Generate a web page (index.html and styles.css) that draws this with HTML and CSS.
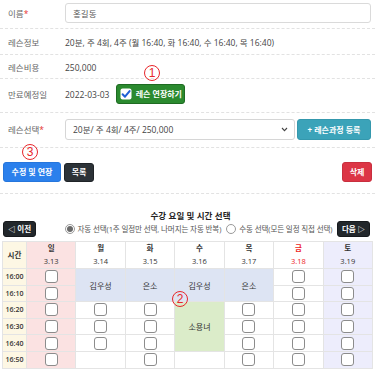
FILE: index.html
```html
<!DOCTYPE html>
<html lang="ko">
<head>
<meta charset="utf-8">
<title>레슨 연장</title>
<link rel="stylesheet" href="styles.css">
</head>
<body>
<div class="page">
  <div class="form-row row-name">
    <div class="label">이름<span class="req">*</span></div>
    <div class="value"><input class="text-input" type="text" value="홍길동"></div>
  </div>
  <div class="form-row row-info">
    <div class="label">레슨정보</div>
    <div class="value">20분, 주 4회, 4주 (월 16:40, 화 16:40, 수 16:40, 목 16:40)</div>
  </div>
  <div class="form-row row-price">
    <div class="label">레슨비용</div>
    <div class="value">250,000</div>
  </div>
  <div class="form-row row-expire">
    <div class="label">만료예정일</div>
    <div class="value">
      <span>2022-03-03</span>
      <button class="btn btn-green" type="button">
        <svg class="check-ico" width="12" height="12" viewBox="0 0 12 12"><rect x="0.5" y="0.5" width="11" height="11" rx="2" fill="#fff"/><path d="M2.6 6.2 L5 8.7 L9.6 3.1" fill="none" stroke="#1f5fd6" stroke-width="2" stroke-linecap="round" stroke-linejoin="round"/></svg>
        레슨 연장하기
      </button>
    </div>
  </div>
  <div class="form-row row-select">
    <div class="label">레슨선택<span class="req">*</span></div>
    <div class="value select-line">
      <div class="select-box">
        <select class="select"><option>20분/ 주 4회/ 4주/ 250,000</option></select>
        <svg class="chev" width="7" height="5" viewBox="0 0 7 5"><path d="M1 1 L3.5 3.6 L6 1" fill="none" stroke="#444" stroke-width="1.1"/></svg>
      </div>
      <button class="btn btn-info" type="button">+ 레슨과정 등록</button>
    </div>
  </div>
  <div class="action-row">
    <button class="btn btn-primary" type="button">수정 및 연장</button>
    <button class="btn btn-dark" type="button">목록</button>
    <button class="btn btn-danger" type="button">삭제</button>
  </div>

  <div class="schedule">
    <div class="sched-title">수강 요일 및 시간 선택</div>
    <div class="nav-row">
      <button class="btn btn-nav" type="button">◁ 이전</button>
      <div class="radios">
        <span class="radio on"></span><span class="radio-label">자동 선택(1주 일정만 선택, 나머지는 자동 반복)</span>
        <span class="radio"></span><span class="radio-label">수동 선택(모든 일정 직접 선택)</span>
      </div>
      <button class="btn btn-nav" type="button">다음 ▷</button>
    </div>

    <div class="grid">
      <div class="cell head time-col">시간</div>
      <div class="cell head sun"><b>일</b><span>3.13</span></div>
      <div class="cell head"><b>월</b><span>3.14</span></div>
      <div class="cell head"><b>화</b><span>3.15</span></div>
      <div class="cell head"><b>수</b><span>3.16</span></div>
      <div class="cell head"><b>목</b><span>3.17</span></div>
      <div class="cell head fri"><b>금</b><span>3.18</span></div>
      <div class="cell head sat"><b>토</b><span>3.19</span></div>

      <div class="cell time-col t">16:00</div>
      <div class="cell sun"><input class="cb" type="checkbox"></div>
      <div class="cell booked blue span2">김우성</div>
      <div class="cell booked blue span2">은소</div>
      <div class="cell booked blue span2">김우성</div>
      <div class="cell booked blue span2">은소</div>
      <div class="cell"><input class="cb" type="checkbox"></div>
      <div class="cell sat"><input class="cb" type="checkbox"></div>

      <div class="cell time-col t">16:10</div>
      <div class="cell sun"><input class="cb" type="checkbox"></div>
      <div class="cell"><input class="cb" type="checkbox"></div>
      <div class="cell sat"><input class="cb" type="checkbox"></div>

      <div class="cell time-col t">16:20</div>
      <div class="cell sun"><input class="cb" type="checkbox"></div>
      <div class="cell"><input class="cb" type="checkbox"></div>
      <div class="cell"><input class="cb" type="checkbox"></div>
      <div class="cell booked green span3">소용녀</div>
      <div class="cell"><input class="cb" type="checkbox"></div>
      <div class="cell"><input class="cb" type="checkbox"></div>
      <div class="cell sat"><input class="cb" type="checkbox"></div>

      <div class="cell time-col t">16:30</div>
      <div class="cell sun"><input class="cb" type="checkbox"></div>
      <div class="cell"><input class="cb" type="checkbox"></div>
      <div class="cell"><input class="cb" type="checkbox"></div>
      <div class="cell"><input class="cb" type="checkbox"></div>
      <div class="cell"><input class="cb" type="checkbox"></div>
      <div class="cell sat"><input class="cb" type="checkbox"></div>

      <div class="cell time-col t">16:40</div>
      <div class="cell sun"><input class="cb" type="checkbox"></div>
      <div class="cell"><input class="cb" type="checkbox"></div>
      <div class="cell"><input class="cb" type="checkbox"></div>
      <div class="cell"><input class="cb" type="checkbox"></div>
      <div class="cell"><input class="cb" type="checkbox"></div>
      <div class="cell sat"><input class="cb" type="checkbox"></div>

      <div class="cell time-col t">16:50</div>
      <div class="cell sun"><input class="cb" type="checkbox"></div>
      <div class="cell"></div>
      <div class="cell"><input class="cb" type="checkbox"></div>
      <div class="cell"></div>
      <div class="cell"><input class="cb" type="checkbox"></div>
      <div class="cell"><input class="cb" type="checkbox"></div>
      <div class="cell sat"><input class="cb" type="checkbox"></div>

      <div class="cell time-col t"></div>
      <div class="cell sun"><input class="cb" type="checkbox"></div>
      <div class="cell booked green"></div>
      <div class="cell"><input class="cb" type="checkbox"></div>
      <div class="cell booked green"></div>
      <div class="cell"><input class="cb" type="checkbox"></div>
      <div class="cell"><input class="cb" type="checkbox"></div>
      <div class="cell sat"><input class="cb" type="checkbox"></div>
    </div>
  </div>

  <span class="marker m1">1</span>
  <span class="marker m2">2</span>
  <span class="marker m3">3</span>
</div>
</body>
</html>
```

FILE: styles.css
```css
* { box-sizing: border-box; }
html, body { margin: 0; padding: 0; overflow: hidden; }
body {
  width: 375px;
  height: 369px;
  background: #fff;
  color: #444;
  font-family: "Open Sans", "Noto Sans CJK KR", sans-serif;
  font-size: 8.5px;
  line-height: 11px;
}
.page { position: relative; }

.form-row {
  display: flex;
  align-items: center;
  border-bottom: 1px dashed #e2e2e2;
}
.label {
  flex: none;
  width: 65px;
  padding-left: 8px;
  color: #666;
}
.req { color: #e5322d; }
.value {
  flex: 1;
  display: flex;
  align-items: center;
  gap: 7px;
  color: #444;
}
.row-name { padding: 3px 4px 5px 0; }
.row-info { padding: 8px 4px 6px 0; }
.row-price { padding: 7px 4px 5px 0; }
.row-expire { padding: 5px 4px 8px 0; }
.row-select { padding: 6px 4px 7px 0; }

.text-input {
  width: 100%;
  height: 20px;
  border: 1px solid #dadada;
  border-radius: 3px;
  padding: 0 7px;
  font: inherit;
  color: #555;
  background: #fff;
}

.btn {
  border: 1px solid transparent;
  border-radius: 3px;
  font-family: "Open Sans", "Noto Sans CJK KR", sans-serif;
  font-size: 8px;
  font-weight: 700;
  line-height: 10px;
  color: #fff;
  padding: 0 6px;
  height: 20px;
  display: inline-flex;
  align-items: center;
  justify-content: center;
  white-space: nowrap;
}
.btn-green {
  background: #2b8a2f;
  border-color: #1e6b22;
  width: 69px;
  gap: 4px;
  padding: 0 4px;
}
.check-ico { flex: none; }

.select-line { gap: 2px; }
.select-box {
  flex: 1;
  height: 21px;
  display: flex;
  align-items: center;
  border: 1px solid #d6d6d6;
  border-radius: 3px;
  padding: 0 6px 0 7px;
  background: #fff;
}
.select {
  flex: 1;
  appearance: none;
  -webkit-appearance: none;
  border: 0;
  padding: 0;
  background: transparent;
  font: inherit;
  color: #444;
  outline: none;
}
.chev { flex: none; }
.btn-info {
  background: #3ba3b9;
  border-color: #3498ad;
  width: 74px;
  height: 21px;
}

.action-row {
  display: flex;
  align-items: center;
  gap: 3px;
  padding: 14px 3px 11px;
  border-bottom: 1px dashed #e2e2e2;
}
.btn-primary { background: #2b80ec; border-color: #2676dc; width: 58px; }
.btn-dark { background: #2c3237; border-color: #1f2327; width: 30px; height: 19px; }
.btn-danger { background: #dc3545; border-color: #c82f3e; width: 30px; margin-left: auto; }

.schedule { padding: 16px 2px 0; }
.sched-title {
  text-align: center;
  font-family: "Noto Sans CJK KR", sans-serif;
  font-weight: 700;
  font-size: 8.5px;
  line-height: 11px;
  color: #222;
  padding-left: 6px;
}
.nav-row {
  display: flex;
  align-items: center;
  justify-content: space-between;
  height: 16px;
  margin: 0 3px 4px 1px;
}
.btn-nav {
  background: #22272b;
  border-color: #16191c;
  height: 16px;
  width: 33px;
  padding: 0 3px;
  font-size: 7.5px;
}
.radios {
  display: flex;
  align-items: center;
  gap: 3px;
  margin-left: 26px;
  font-size: 7.5px;
  letter-spacing: -0.1px;
  color: #555;
}
.radio {
  flex: none;
  width: 10px;
  height: 10px;
  border: 1px solid #9a9a9a;
  border-radius: 50%;
  background: #fff;
  display: inline-flex;
  align-items: center;
  justify-content: center;
}
.radio.on::after {
  content: "";
  width: 6px;
  height: 6px;
  border-radius: 50%;
  background: #6a6a6a;
}
.radio-label { margin-right: 2px; }

.grid {
  display: grid;
  grid-template-columns: 23px repeat(7, 1fr);
  grid-template-rows: 26px;
  grid-auto-rows: 15.6px;
  gap: 1px;
  background: #e4e4e4;
  border: 1px solid #e4e4e4;
}
.cell {
  background: #fff;
  display: flex;
  align-items: center;
  justify-content: center;
  font-size: 8px;
  color: #333;
}
.cell.head {
  flex-direction: column;
  font-size: 7.5px;
  line-height: 13px;
  color: #333;
}
.cell.head b { font-weight: 700; }
.cell.head.time-col { font-weight: 700; }
.cell.head.fri { color: #ee1c25; }
.time-col { background: #fdf7e4; }
.t { font-size: 7px; font-weight: 600; color: #333; }
.sun { background: #fbe2e2; }
.sat { background: #ededfc; }
.booked { font-size: 8px; color: #333; }
.blue { background: #dde4f3; }
.green { background: #dbecc9; }
.span2 { grid-row: span 2; }
.span3 { grid-row: span 3; }

.cb {
  appearance: none;
  -webkit-appearance: none;
  margin: 0;
  width: 13px;
  height: 13px;
  border: 1px solid #8c8c8c;
  border-radius: 3px;
  background: #fff;
}

.marker {
  position: absolute;
  width: 16px;
  height: 16px;
  border: 1px solid #e8262b;
  border-radius: 50%;
  color: #e8262b;
  font-family: "Liberation Sans", sans-serif;
  font-size: 12px;
  line-height: 14px;
  text-align: center;
}
.m1 { left: 144px; top: 65px; }
.m2 { left: 172px; top: 291px; }
.m3 { left: 22px; top: 144px; }
```
